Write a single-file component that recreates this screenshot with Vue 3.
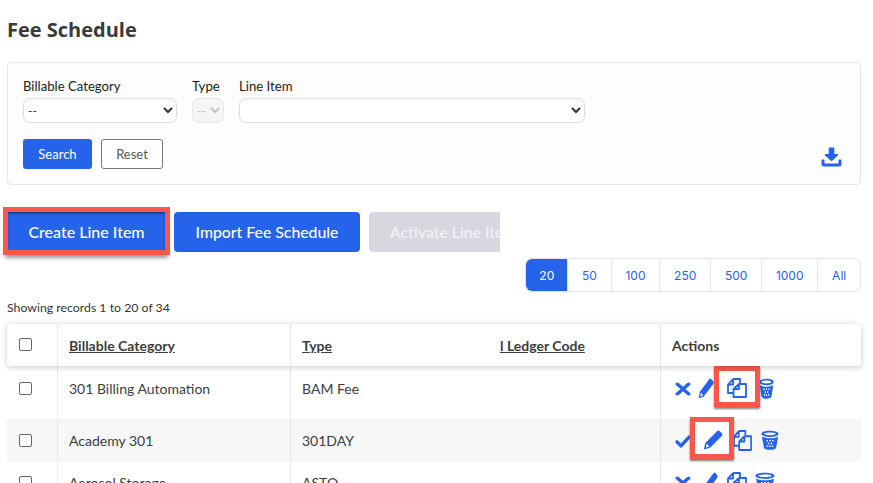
<script setup>
const sizes = ['20', '50', '100', '250', '500', '1000', 'All']
const rows = [
  { name: '301 Billing Automation', type: 'BAM Fee', active: false },
  { name: 'Academy 301', type: '301DAY', active: true },
  { name: 'Aerosol Storage', type: 'ASTO', active: false }
]
</script>

<template>
  <div class="page">
    <h1 class="title">Fee Schedule</h1>

    <section class="filters">
      <div class="fields">
        <label class="field">
          <span>Billable Category</span>
          <select class="cat"><option>--</option></select>
        </label>
        <label class="field">
          <span>Type</span>
          <select class="type" disabled><option>--</option></select>
        </label>
        <label class="field">
          <span>Line Item</span>
          <select class="line"><option></option></select>
        </label>
      </div>
      <div class="filter-actions">
        <div class="filter-btns">
          <button class="search">Search</button>
          <button class="reset">Reset</button>
        </div>
        <svg class="download" viewBox="0 0 20 20" fill="#2563eb">
          <path d="M8 0.5h4a.8.8 0 0 1 .8.8V7h3a.9.9 0 0 1 .6 1.5l-5.700 5.200a1 1 0 0 1-1.400 0L3.600 8.500A.9.9 0 0 1 4.200 7h3V1.300A.8.8 0 0 1 8 .5z" />
          <path d="M1.500 12.200a1.500 1.500 0 0 1 1.500 1.500V16a.6.6 0 0 0 .6.6h12.800A.6.6 0 0 0 17 16v-2.300a1.500 1.500 0 0 1 3 0V17a2.500 2.500 0 0 1-2.500 2.500h-15A2.500 2.500 0 0 1 0 17v-3.300a1.500 1.500 0 0 1 1.500-1.500z" />
        </svg>
      </div>
    </section>

    <div class="main-actions">
      <button class="big primary marked">Create Line Item</button>
      <button class="big primary">Import Fee Schedule</button>
      <div class="clip"><button class="big muted">Activate Line Item</button></div>
    </div>

    <div class="pager-row">
      <div class="pager">
        <span v-for="(s, i) in sizes" :key="s" class="page-size" :class="{ on: i === 0 }">{{ s }}</span>
      </div>
    </div>

    <p class="count">Showing records 1 to 20 of 34</p>

    <div class="table">
      <div class="row head">
        <div class="cell check"><span class="box"></span></div>
        <div class="cell cat-col"><u>Billable Category</u></div>
        <div class="cell type-col"><u>Type</u></div>
        <div class="cell ledger-col"><u>l Ledger Code</u></div>
        <div class="cell actions plain">Actions</div>
      </div>
      <div v-for="(r, i) in rows" :key="r.name" class="row" :class="'r' + (i + 1)">
        <div class="cell check"><span class="box"></span></div>
        <div class="cell cat-col">{{ r.name }}</div>
        <div class="cell type-col">{{ r.type }}</div>
        <div class="cell ledger-col"></div>
        <div class="cell actions">
          <svg v-if="r.active" class="ico state" viewBox="0 0 20 16" fill="none" stroke="#2563eb" stroke-width="4.200" stroke-linecap="round" stroke-linejoin="round"><path d="M2.500 8.500l5 5 10-11" /></svg>
          <svg v-else class="ico state" viewBox="0 0 20 20" preserveAspectRatio="none" fill="none" stroke="#2563eb" stroke-width="4.600" stroke-linecap="round"><path d="M3 3l14 14M17 3L3 17" /></svg>
          <svg class="ico pen" viewBox="0 0 20 20" preserveAspectRatio="none">
            <path fill="#2563eb" d="M14 1.200a2 2 0 0 1 2.800 0l2 2a2 2 0 0 1 0 2.800L7 17.800 .8 19.400l1.500-6.400z" />
            <path fill="#fff" d="M3.700 13.800l2.700 2.700-3.500 1z" />
          </svg>
          <svg class="ico copy" viewBox="0 0 20 20" preserveAspectRatio="none" fill="none" stroke="#2563eb" stroke-width="1.800" stroke-linejoin="round">
            <path d="M6 1h7v4M6 1L1 6.500V15h5.500M6 1v5.500H1" />
            <path d="M12 6h7v13H6.500v-8zM12 6v5H6.500" />
          </svg>
          <svg class="ico bin" viewBox="0 0 20 22" preserveAspectRatio="none" fill="#2563eb">
            <path d="M10 .8c5 0 9.500 1.200 9.500 3.400S15 7.600 10 7.600 .5 6.400 .5 4.200 5 .8 10 .8zm0 1.900c-3.600 0-6.600.7-6.600 1.500S6.400 5.700 10 5.700s6.600-.7 6.600-1.500S13.600 2.700 10 2.700z" />
            <path fill-rule="evenodd" d="M1 7.200c2 1.500 5.500 2 9 2s7-.5 9-2l-2.200 12c-.3 1.800-3.500 2.500-6.800 2.500s-6.500-.7-6.800-2.500zM6 11h1.600v1.600H6zm3.200 0h1.600v1.600H9.200zm3.200 0H14v1.600h-1.600zM7.600 14h1.600v1.600H7.600zm3.200 0h1.600v1.600h-1.600zM6.400 17H8v1.600H6.400zM12 17h1.600v1.600H12zm-2.800 0h1.600v1.600H9.200z" />
          </svg>
        </div>
      </div>

      <span class="mark mark-copy"></span>
      <span class="mark mark-pen"></span>
    </div>
  </div>
</template>

<style>
html, body {
  margin: 0;
  background: #fff;
  overflow: hidden;
}
</style>

<style scoped>
.page {
  width: 873px;
  height: 483px;
  overflow: hidden;
  box-sizing: border-box;
  padding: 0 12px 0 7px;
  font-family: Lato, "Liberation Sans", sans-serif;
  color: #3d3d3d;
}
.title {
  margin: 0;
  padding-top: 17px;
  font-family: "Open Sans", sans-serif;
  font-size: 20px;
  line-height: 26px;
  font-weight: 700;
  color: #3a3a3a;
}
.filters {
  margin-top: 19px;
  height: 123px;
  box-sizing: border-box;
  border: 1px solid #e6e6e9;
  border-radius: 4px;
  background: #fdfdfd;
  padding: 15px 15px 0;
}
.fields {
  display: flex;
  gap: 15px;
}
.field {
  display: flex;
  flex-direction: column;
  font-size: 13.15px;
  line-height: 16px;
  color: #222;
}
.field select {
  height: 25px;
  margin-top: 4px;
  box-sizing: border-box;
  border: 1px solid #ddd;
  border-radius: 7px;
  background-color: #fff;
  font-family: Lato, sans-serif;
  font-size: 12px;
  color: #333;
}
.cat { width: 154px; }
.type { width: 32px; }
.field .type { background: #f3f3f3; color: #aaa; }
.line { width: 346px; }
.filter-actions {
  margin-top: 16px;
  display: flex;
  justify-content: space-between;
  align-items: flex-start;
}
.filter-btns {
  display: flex;
  gap: 9px;
}
.filter-btns button {
  height: 30px;
  border-radius: 3px;
  font-family: Lato, sans-serif;
  font-size: 13px;
  padding: 0;
}
.search {
  width: 69px;
  background: #2563eb;
  border: 0;
  color: #fff;
}
.reset {
  width: 62px;
  background: #fff;
  border: 1px solid #777;
  color: #555;
}
.download {
  width: 21px;
  height: 20px;
  margin-right: 3px;
  margin-top: 8px;
}
.main-actions {
  margin-top: 27px;
  display: flex;
  gap: 9px;
}
.big {
  height: 40px;
  border: 0;
  border-radius: 4px;
  font-family: Lato, sans-serif;
  font-size: 15.8px;
  font-weight: 500;
  color: #fff;
  padding: 0 0 1px;
  white-space: nowrap;
}
.primary { background: #2563eb; }
.primary.marked {
  width: 157px;
  height: 38px;
  margin: 0 0 2px 1px;
  padding: 0;
  font-size: 16px;
  border-radius: 0;
  outline: 5px solid #f9574b;
  box-shadow: 0 5px 4px 3px rgba(0, 0, 0, 0.4), inset 0 2px 2px rgba(0, 0, 0, 0.35);
}
.primary:not(.marked) { width: 186px; }
.clip {
  width: 131px;
  overflow: hidden;
  border-radius: 4px 0 0 4px;
}
.muted {
  width: 180px;
  background: #d7d8df;
  color: #f2f2f5;
  text-align: left;
  padding-left: 21px;
}
.pager-row {
  margin-top: 6px;
  display: flex;
  justify-content: flex-end;
}
.pager {
  display: flex;
  height: 34px;
  box-sizing: border-box;
  border: 1px solid #e4e4ee;
  border-radius: 7px;
  overflow: hidden;
  background: #fff;
}
.page-size {
  display: flex;
  align-items: center;
  justify-content: center;
  padding: 0 13.8px;
  font-family: Inter, sans-serif;
  font-size: 12px;
  color: #2563eb;
  border-left: 1px solid #e4e4ee;
}
.page-size.on {
  background: #2563eb;
  color: #fff;
  border-left: 0;
  padding: 0 13px;
}
.count {
  margin: 8px 0 0;
  font-size: 12.3px;
  line-height: 16px;
  color: #333;
}
.table {
  position: relative;
  margin-top: 8px;
  font-size: 14px;
}
.row {
  display: flex;
  height: 43px;
}
.row.r1 { height: 53px; }
.row.r2 { background: #f7f7f7; }
.row.head {
  height: 42px;
  background: #fff;
  border-radius: 4px;
  box-shadow: 0 1px 6px rgba(0, 0, 0, 0.22);
  position: relative;
  z-index: 3;
  font-weight: 700;
  font-size: 14px;
}
.cell {
  box-sizing: border-box;
  padding-left: 11px;
  padding-top: 13px;
  line-height: 18px;
  border-right: 1px solid #e8e8e8;
}
.r1 .cell { padding-top: 14px; }
.r3 .cell { padding-top: 12px; }
.row.head .cell { padding-top: 13px; }
.check { width: 51px; padding-left: 12px; }
.row .check { padding-top: 16px; }
.row.head .check.cell { padding-top: 14px; }
.row.r2 .check { padding-top: 15px; }
.row.r3 .check { padding-top: 14px; }
.cat-col { width: 233px; }
.type-col { width: 199px; border-right: 0; }
.ledger-col { width: 171px; padding-left: 10px; white-space: nowrap; }
.actions { flex: 1; border-right: 0; }
.row .actions { display: flex; align-items: flex-start; padding-left: 14px; }
.row.head .actions { padding-left: 11px; display: block; }
.box {
  display: block;
  width: 13px;
  height: 13px;
  box-sizing: border-box;
  border: 1px solid #666;
  border-radius: 2px;
  background: #fff;
}
.ico { display: block; flex: none; position: relative; }
.r1 .actions.cell { padding-top: 12px; }
.r2 .actions.cell { padding-top: 11px; }
.r3 .actions.cell { padding-top: 10px; }
.state { width: 16px; height: 14px; margin-top: 4px; }
.r2 .state { height: 13px; margin-top: 5px; }

.r1 .pen { width: 16px; height: 21px; margin-left: 7px; }
.r1 .copy { width: 20px; height: 20px; margin-left: 13px; z-index: 2; }
.r1 .bin { width: 15px; height: 21px; margin-left: 12px; }

.r2 .pen { width: 20px; height: 20px; margin-left: 12px; z-index: 2; }
.r2 .copy { width: 19px; height: 21px; margin-left: 10px; }
.r2 .bin { width: 18px; height: 20px; margin-left: 9px; }

.r3 .pen { width: 15px; height: 20px; margin-left: 12px; }
.r3 .copy { width: 20px; height: 20px; margin-left: 9px; }
.r3 .bin { width: 20px; height: 20px; margin-left: 8px; }

.mark {
  position: absolute;
  z-index: 1;
  border: 5px solid #f9574b;
  background: #fff;
  box-shadow: 0 2px 2px rgba(0, 0, 0, 0.5);
  box-sizing: border-box;
  pointer-events: none;
}
.mark-copy { left: 707px; top: 42px; width: 46px; height: 41px; }
.mark-pen { left: 683px; top: 93px; width: 44px; height: 42px; }
</style>
